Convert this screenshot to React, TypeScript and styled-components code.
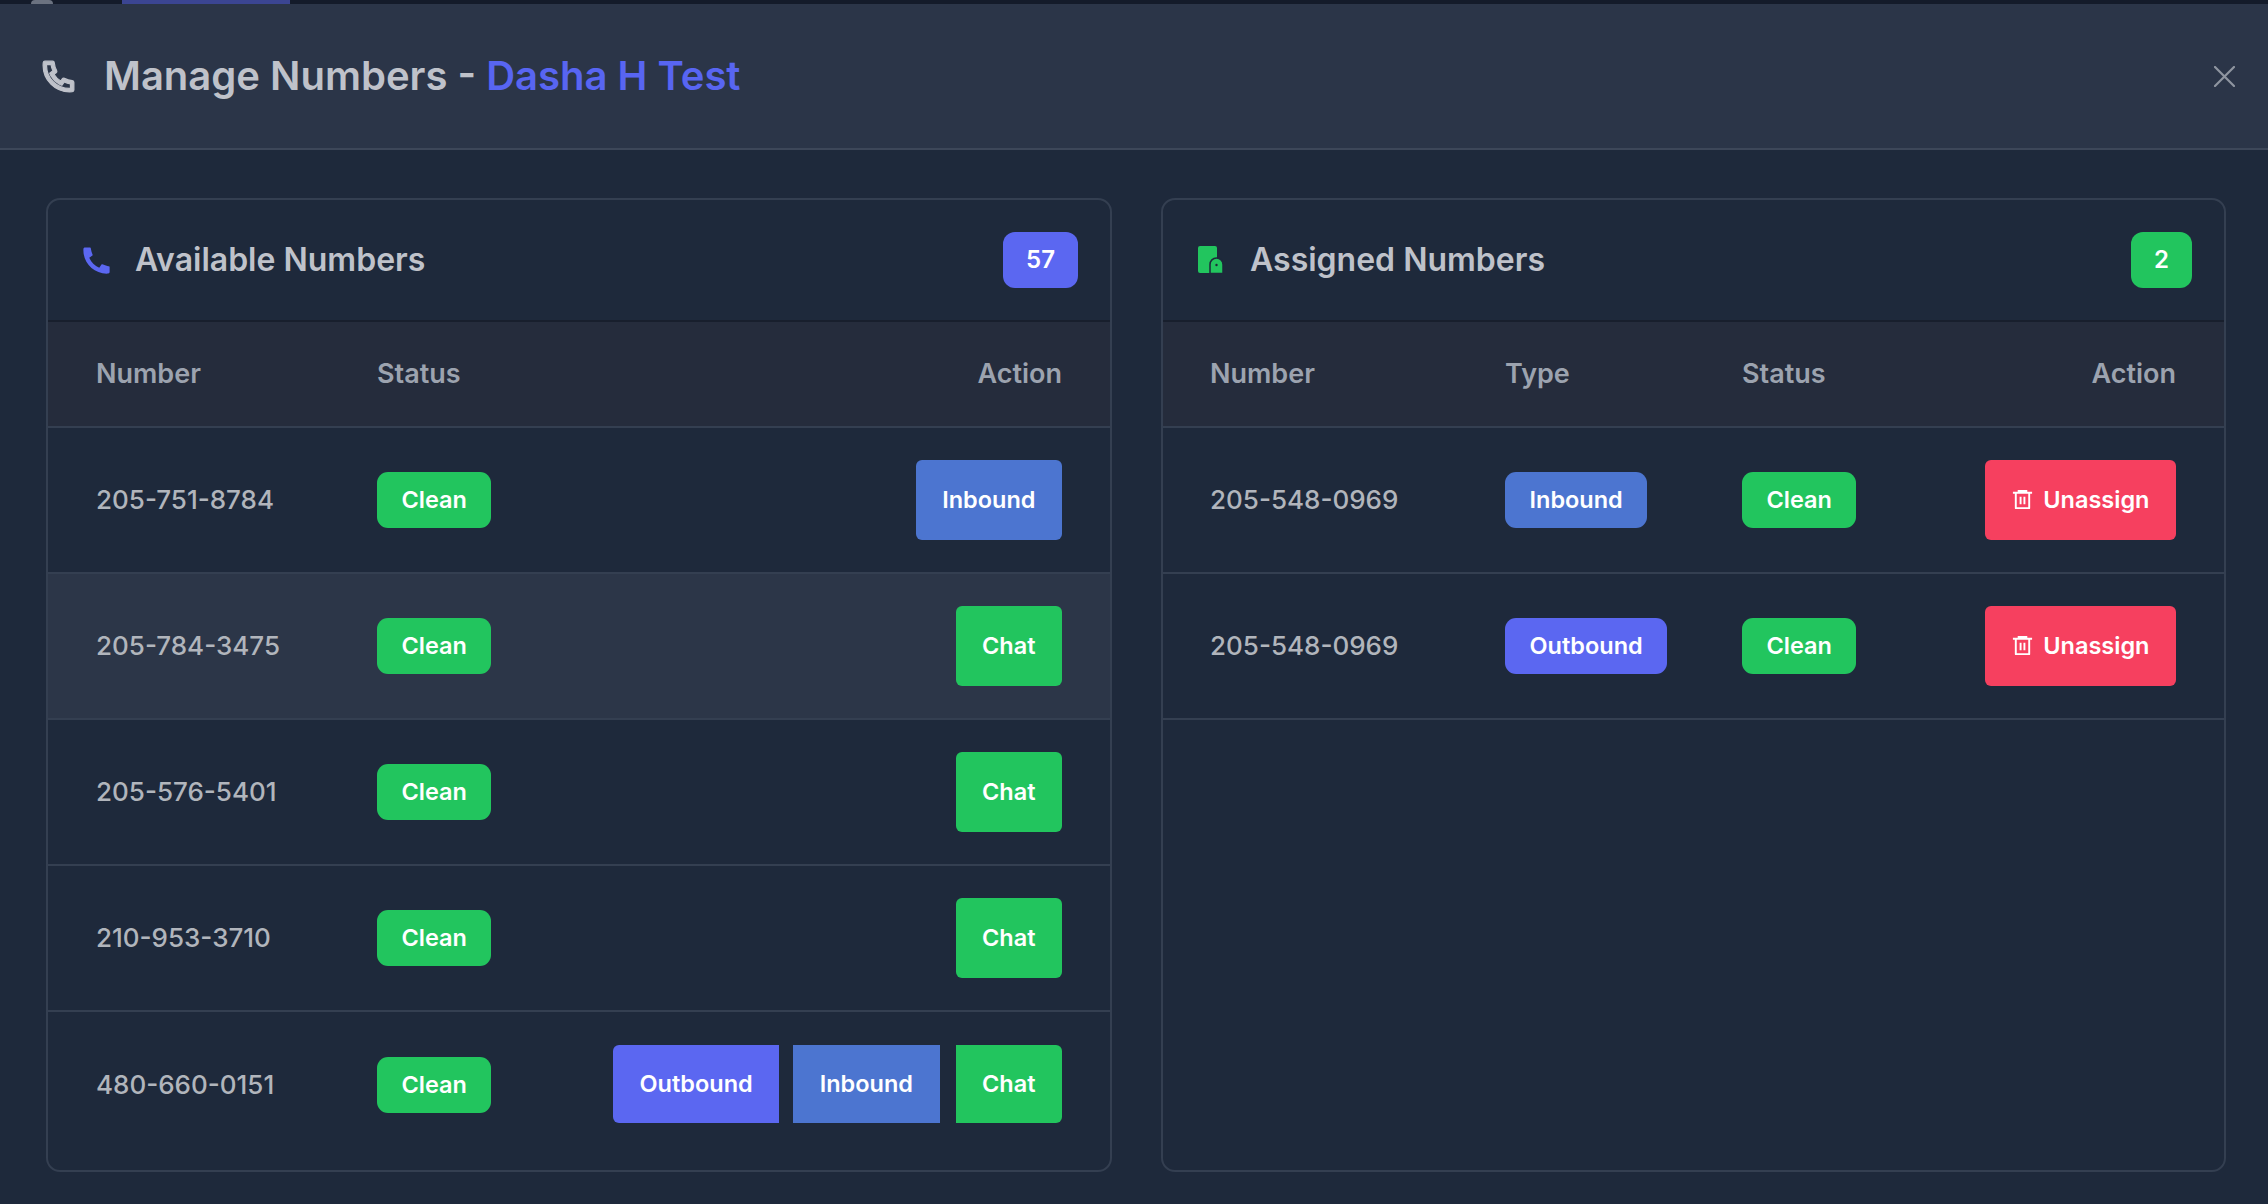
import React from 'react'
import styled, { createGlobalStyle } from 'styled-components'
import { RiPhoneLine, RiPhoneFill, RiDeleteBin6Line } from 'react-icons/ri'

const GlobalStyle = createGlobalStyle`
  html, body {
    margin: 0;
    padding: 0;
    height: 100%;
    overflow: hidden;
    background: #1e293b;
  }
  * { box-sizing: border-box; }
`

const Page = styled.div`
  width: 2268px;
  height: 1204px;
  display: flex;
  flex-direction: column;
  background: #1e293b;
  font-family: Inter, "Noto Sans", sans-serif;
`

const BehindStrip = styled.div`
  height: 4px;
  flex: none;
  display: flex;
  align-items: flex-start;
  gap: 69px;
  padding-left: 31px;
  background: #141b2a;
  overflow: hidden;
`

const BehindAvatar = styled.div`
  width: 22px;
  height: 4px;
  border-radius: 11px 11px 0 0;
  background: #6b7280;
`

const BehindButton = styled.div`
  width: 168px;
  height: 4px;
  background: #3b4592;
`

const ModalHeader = styled.header`
  height: 146px;
  flex: none;
  display: flex;
  align-items: center;
  padding: 0 33px 0 42px;
  background: #2b3548;
  border-bottom: 2px solid #3d4759;
`

const TitleIcon = styled.span`
  display: flex;
  width: 66px;
  margin-left: -4px;
  font-size: 41px;
  color: #bfc2ca;
  svg { stroke: currentColor; stroke-width: 0.7; }
`

const Title = styled.h1`
  flex: 1;
  margin: 0;
  padding-bottom: 2px;
  font-size: 40px;
  font-weight: 600;
  color: #bfc2ca;
`

const Accent = styled.span`
  color: #5865f2;
`

const CloseButton = styled.button`
  display: flex;
  padding: 0;
  border: 0;
  background: none;
  color: #8f95a0;
`

const Body = styled.main`
  flex: 1;
  display: grid;
  grid-template-columns: 1066px 1065px;
  gap: 49px;
  padding: 48px 42px 32px 46px;
  min-height: 0;
`

const Card = styled.section`
  display: flex;
  flex-direction: column;
  border: 2px solid #343f51;
  border-radius: 14px;
  overflow: hidden;
`

const CardHeader = styled.div`
  height: 122px;
  flex: none;
  display: flex;
  align-items: center;
  padding: 0 32px 0 31px;
  border-bottom: 2px solid #181f2d;
`

const CardIcon = styled.span<{ $color: string }>`
  display: flex;
  width: 56px;
  font-size: 35px;
  color: ${p => p.$color};
`

const CardTitle = styled.h2`
  flex: 1;
  margin: 0;
  padding-bottom: 1px;
  font-size: 32px;
  font-weight: 600;
  color: #bfc2ca;
`

const Count = styled.span<{ $color: string }>`
  height: 56px;
  display: flex;
  align-items: center;
  padding: 0 23px 2px;
  border-radius: 12px;
  background: ${p => p.$color};
  color: #fff;
  font-size: 24px;
  font-weight: 600;
`

const Row = styled.div<{ $cols: string; $inset: number; $highlight?: boolean; $last?: boolean }>`
  height: 146px;
  flex: none;
  display: grid;
  grid-template-columns: ${p => p.$cols};
  align-items: center;
  padding: 0 48px 0 ${p => p.$inset}px;
  border-bottom: ${p => (p.$last ? '0' : '2px solid #343f51')};
  background: ${p => (p.$highlight ? '#2c3648' : 'transparent')};
`

const HeadRow = styled(Row)`
  height: 106px;
  padding-bottom: 1px;
  background: #252c3c;
  color: #9ca3af;
  font-size: 27px;
  font-weight: 600;
`

const Split = styled.div`
  display: flex;
  justify-content: space-between;
  align-items: center;
`

const RightCell = styled.div`
  display: flex;
  justify-content: flex-end;
  align-items: center;
`

const NumberCell = styled.span`
  padding-bottom: 2px;
  font-size: 26px;
  font-weight: 500;
  color: #b1b5bc;
`

const Pill = styled.span<{ $color: string }>`
  justify-self: start;
  height: 56px;
  display: inline-flex;
  align-items: center;
  padding: 0 24.500px 2px;
  border-radius: 11px;
  background: ${p => p.$color};
  color: #fff;
  font-size: 23.500px;
  font-weight: 600;
`

const ActionButton = styled.button<{ $color: string }>`
  height: 80px;
  display: inline-flex;
  align-items: center;
  gap: 9px;
  padding: 0 26.500px 2px;
  border: 0;
  border-radius: 6px;
  background: ${p => p.$color};
  color: #fff;
  font-family: inherit;
  font-size: 23.500px;
  font-weight: 600;
`

const ButtonGroup = styled.div`
  display: flex;
  align-items: center;
  gap: 14px;
  margin-bottom: 2px;
  ${ActionButton} {
    height: 78px;
    border-radius: 0;
  }
  ${ActionButton}:first-child {
    border-radius: 6px 0 0 6px;
  }
  ${ActionButton}:last-child {
    margin-left: 2px;
    border-radius: 0 6px 6px 0;
  }
`

const GREEN = '#22c55e'
const INDIGO = '#5b67f1'
const BLUE = '#4c75d0'
const RED = '#f6405f'

const LockedFile = () => (
  <svg width="35" height="28" viewBox="-4 0 35 28" fill="none">
    <rect x="0" y="0" width="19" height="27" rx="2" fill={GREEN} />
    <path
      d="M12 27.500v-9a6.500 6.500 0 0 1 13 0v9z"
      fill={GREEN}
      stroke="#1e293b"
      strokeWidth="1.500"
    />
    <circle cx="18.500" cy="19" r="1.200" fill="#1e293b" />
  </svg>
)

const CloseIcon = () => (
  <svg width="21" height="21" viewBox="0 0 21 21" fill="none" stroke="currentColor" strokeWidth="2.200" strokeLinecap="round">
    <path d="M1 1l19 19M20 1L1 20" />
  </svg>
)

const available = [
  { number: '205-751-8784', actions: ['Inbound'] },
  { number: '205-784-3475', actions: ['Chat'], highlight: true },
  { number: '205-576-5401', actions: ['Chat'] },
  { number: '210-953-3710', actions: ['Chat'] },
  { number: '480-660-0151', actions: ['Outbound', 'Inbound', 'Chat'] },
]

const assigned = [
  { number: '205-548-0969', type: 'Inbound' },
  { number: '205-548-0969', type: 'Outbound' },
]

const actionColor: Record<string, string> = { Outbound: INDIGO, Inbound: BLUE, Chat: GREEN }

const AVAILABLE_COLS = '281px 1fr'
const ASSIGNED_COLS = '295px 237px 1fr auto'

export default function App() {
  return (
    <Page>
      <GlobalStyle />
      <BehindStrip>
        <BehindAvatar />
        <BehindButton />
      </BehindStrip>
      <ModalHeader>
        <TitleIcon><RiPhoneLine /></TitleIcon>
        <Title>Manage Numbers - <Accent>Dasha H Test</Accent></Title>
        <CloseButton aria-label="Close"><CloseIcon /></CloseButton>
      </ModalHeader>
      <Body>
        <Card>
          <CardHeader>
            <CardIcon $color={INDIGO}><RiPhoneFill /></CardIcon>
            <CardTitle>Available Numbers</CardTitle>
            <Count $color={INDIGO}>57</Count>
          </CardHeader>
          <HeadRow $cols={AVAILABLE_COLS} $inset={48}>
            <span>Number</span>
            <Split>
              <span>Status</span>
              <span>Action</span>
            </Split>
          </HeadRow>
          {available.map((row, i) => (
            <Row
              key={row.number}
              $cols={AVAILABLE_COLS}
              $inset={48}
              $highlight={row.highlight}
              $last={i === available.length - 1}
            >
              <NumberCell>{row.number}</NumberCell>
              <Split>
                <Pill $color={GREEN}>Clean</Pill>
                <RightCell>
                  {row.actions.length > 1 ? (
                    <ButtonGroup>
                      {row.actions.map(a => (
                        <ActionButton key={a} $color={actionColor[a]}>{a}</ActionButton>
                      ))}
                    </ButtonGroup>
                  ) : (
                    <ActionButton $color={actionColor[row.actions[0]]}>{row.actions[0]}</ActionButton>
                  )}
                </RightCell>
              </Split>
            </Row>
          ))}
        </Card>
        <Card>
          <CardHeader>
            <CardIcon $color={GREEN}><LockedFile /></CardIcon>
            <CardTitle>Assigned Numbers</CardTitle>
            <Count $color={GREEN}>2</Count>
          </CardHeader>
          <HeadRow $cols={ASSIGNED_COLS} $inset={47}>
            <span>Number</span>
            <span>Type</span>
            <span>Status</span>
            <RightCell>Action</RightCell>
          </HeadRow>
          {assigned.map(row => (
            <Row key={row.type} $cols={ASSIGNED_COLS} $inset={47}>
              <NumberCell>{row.number}</NumberCell>
              <Pill $color={row.type === 'Inbound' ? BLUE : INDIGO}>{row.type}</Pill>
              <Pill $color={GREEN}>Clean</Pill>
              <ActionButton $color={RED}>
                <RiDeleteBin6Line size={23} />
                Unassign
              </ActionButton>
            </Row>
          ))}
        </Card>
      </Body>
    </Page>
  )
}
